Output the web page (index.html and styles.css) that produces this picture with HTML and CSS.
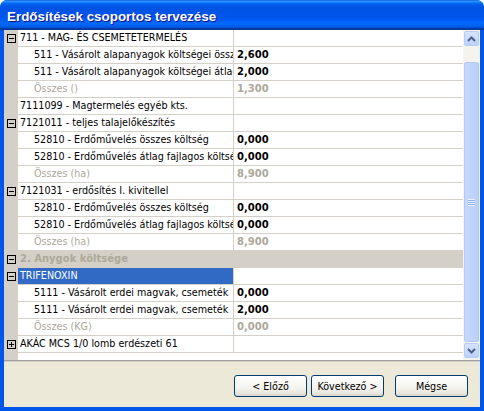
FILE: index.html
```html
<!DOCTYPE html>
<html>
<head>
<meta charset="utf-8">
<link rel="stylesheet" href="styles.css">
</head>
<body>
<div class="window">
  <div class="titlebar"><span class="title">Erdősítések csoportos tervezése</span></div>
  <div class="client">
    <div class="grid">
      <div class="rows">
        <div class="row"><div class="tree"><svg class="box" width="9" height="9" viewBox="0 0 9 9"><rect x="0.5" y="0.5" width="8" height="8" fill="none" stroke="#000"/><path d="M2 4.5H7" stroke="#000"/></svg></div><div class="name">711 - MAG- ÉS CSEMETETERMELÉS</div><div class="val"></div></div>
        <div class="row"><div class="tree"></div><div class="name l1">511 - Vásárolt alapanyagok költségei összesen</div><div class="val">2,600</div></div>
        <div class="row"><div class="tree"></div><div class="name l1">511 - Vásárolt alapanyagok költségei átlaga</div><div class="val">2,000</div></div>
        <div class="row sum"><div class="tree"></div><div class="name l1">Összes ()</div><div class="val">1,300</div></div>
        <div class="row"><div class="tree"></div><div class="name">7111099 - Magtermelés egyéb kts.</div><div class="val"></div></div>
        <div class="row"><div class="tree"><svg class="box" width="9" height="9" viewBox="0 0 9 9"><rect x="0.5" y="0.5" width="8" height="8" fill="none" stroke="#000"/><path d="M2 4.5H7" stroke="#000"/></svg></div><div class="name">7121011 - teljes talajelőkészítés</div><div class="val"></div></div>
        <div class="row"><div class="tree"></div><div class="name l1">52810 - Erdőművelés összes költség</div><div class="val">0,000</div></div>
        <div class="row"><div class="tree"></div><div class="name l1">52810 - Erdőművelés átlag fajlagos költsége</div><div class="val">0,000</div></div>
        <div class="row sum"><div class="tree"></div><div class="name l1">Összes (ha)</div><div class="val">8,900</div></div>
        <div class="row"><div class="tree"><svg class="box" width="9" height="9" viewBox="0 0 9 9"><rect x="0.5" y="0.5" width="8" height="8" fill="none" stroke="#000"/><path d="M2 4.5H7" stroke="#000"/></svg></div><div class="name">7121031 - erdősítés I. kivitellel</div><div class="val"></div></div>
        <div class="row"><div class="tree"></div><div class="name l1">52810 - Erdőművelés összes költség</div><div class="val">0,000</div></div>
        <div class="row"><div class="tree"></div><div class="name l1">52810 - Erdőművelés átlag fajlagos költsége</div><div class="val">0,000</div></div>
        <div class="row sum"><div class="tree"></div><div class="name l1">Összes (ha)</div><div class="val">8,900</div></div>
        <div class="row group"><div class="tree"><svg class="box" width="9" height="9" viewBox="0 0 9 9"><rect x="0.5" y="0.5" width="8" height="8" fill="none" stroke="#000"/><path d="M2 4.5H7" stroke="#000"/></svg></div><div class="name">2. Anygok költsége</div><div class="val"></div></div>
        <div class="row selected"><div class="tree"><svg class="box" width="9" height="9" viewBox="0 0 9 9"><rect x="0.5" y="0.5" width="8" height="8" fill="none" stroke="#000"/><path d="M2 4.5H7" stroke="#000"/></svg></div><div class="name">TRIFENOXIN</div><div class="val"></div></div>
        <div class="row"><div class="tree"></div><div class="name l1">5111 - Vásárolt erdei magvak, csemeték</div><div class="val">0,000</div></div>
        <div class="row"><div class="tree"></div><div class="name l1">5111 - Vásárolt erdei magvak, csemeték</div><div class="val">2,000</div></div>
        <div class="row sum"><div class="tree"></div><div class="name l1">Összes (KG)</div><div class="val">0,000</div></div>
        <div class="row"><div class="tree"><svg class="box" width="9" height="9" viewBox="0 0 9 9"><rect x="0.5" y="0.5" width="8" height="8" fill="none" stroke="#000"/><path d="M2 4.5H7M4.5 2V7" stroke="#000"/></svg></div><div class="name">AKÁC MCS 1/0 lomb erdészeti 61</div><div class="val"></div></div>
      </div>
      <div class="scrollbar">
        <div class="sbtn"><svg width="9" height="6" viewBox="0 0 9 6"><path d="M1 5L4.5 1.5L8 5" fill="none" stroke="#4D6185" stroke-width="2"/></svg></div>
        <div class="track"></div>
        <div class="thumb"><div class="grip"></div></div>
        <div class="sbtn"><svg width="9" height="6" viewBox="0 0 9 6"><path d="M1 1L4.5 4.5L8 1" fill="none" stroke="#4D6185" stroke-width="2"/></svg></div>
      </div>
    </div>
    <div class="sep"></div>
    <div class="buttons">
      <button class="btn">&lt; Előző</button>
      <button class="btn">Következő &gt;</button>
      <button class="btn cancel">Mégse</button>
    </div>
  </div>
</div>
</body>
</html>
```
FILE: styles.css
```css
html, body {
  margin: 0;
  padding: 0;
  background: #ffffff;
}
.window {
  width: 484px;
  height: 411px;
  box-sizing: border-box;
  display: flex;
  flex-direction: column;
  background: #0055EA;
  border-radius: 7px 7px 0 0;
  padding: 0 4px 4px 4px;
  overflow: hidden;
  font-family: "DejaVu Sans", Verdana, sans-serif;
  font-size: 9.6px;
}
.titlebar {
  height: 30px;
  margin: 0 -4px;
  padding-left: 7px;
  display: flex;
  align-items: center;
  background: linear-gradient(to bottom, #0058EE 0%, #3593FF 4%, #288EFF 6%, #127DFF 8%, #036FFC 10%, #0262EE 14%, #0057E5 20%, #0054E3 24%, #0055EB 56%, #005BF5 66%, #026AFE 76%, #0062EF 86%, #0052D6 92%, #0040AB 94%, #003092 100%);
  border-radius: 7px 7px 0 0;
}
.title {
  color: #ffffff;
  font-family: "Liberation Sans", Arial, sans-serif;
  font-weight: bold;
  font-size: 13.4px;
  text-shadow: 1px 1px #0F1089;
  padding-top: 2px;
}
.client {
  flex: 1;
  display: flex;
  flex-direction: column;
  background: #ECE9D8;
}
.grid {
  height: 330px;
  display: flex;
}
.rows {
  flex: 1;
  display: flex;
  flex-direction: column;
  background: linear-gradient(to right, #D4D0C8 14px, #ffffff 14px);
  overflow: hidden;
}
.row {
  display: flex;
  height: 17px;
  flex: none;
  color: #000;
}
.tree {
  width: 14px;
  flex: none;
  background: #D4D0C8;
  display: flex;
  align-items: center;
  padding-left: 3px;
  box-sizing: border-box;
}
.name {
  width: 216px;
  flex: none;
  box-sizing: border-box;
  border-right: 1px solid #D4D0C8;
  border-bottom: 1px solid #D4D0C8;
  padding-left: 2px;
  white-space: nowrap;
  overflow: hidden;
  line-height: 16px;
}
.name.l1 {
  padding-left: 16px;
}
.val {
  flex: 1;
  box-sizing: border-box;
  border-bottom: 1px solid #D4D0C8;
  padding-left: 3px;
  line-height: 16px;
  font-weight: bold;
  font-size: 10px;
  white-space: nowrap;
}
.sum .name, .sum .val {
  color: #ACA899;
}
.group .name, .group .val {
  background: #D4D0C8;
  color: #ACA899;
  font-weight: bold;
  font-size: 10px;
  border-right-color: #D4D0C8;
}
.selected .name {
  background: #316AC5;
  color: #ffffff;
}
.scrollbar {
  width: 17px;
  flex: none;
  display: flex;
  flex-direction: column;
  background: #F4F3EE;
  padding: 1px 0 2px 1px;
  box-sizing: border-box;
}
.sbtn {
  width: 15px;
  height: 15px;
  flex: none;
  box-sizing: border-box;
  border: 1px solid #B8CCF5;
  border-radius: 2px;
  background: linear-gradient(to bottom, #D7E3FD, #BCD0FB);
  display: flex;
  align-items: center;
  justify-content: center;
}
.track {
  height: 16px;
  flex: none;
}
.thumb {
  flex: 1;
  width: 15px;
  box-sizing: border-box;
  border: 1px solid #B4C8F6;
  border-radius: 2px;
  background: linear-gradient(to right, #C8D9FE, #BBCFFC);
  display: flex;
  align-items: center;
  justify-content: center;
  margin-bottom: 1px;
}
.grip {
  width: 7px;
  height: 7px;
  background: repeating-linear-gradient(to bottom, #EEF4FE 0, #EEF4FE 1px, #8CB0F8 1px, #8CB0F8 2px);
}
.sep {
  height: 2px;
  background: #A0A0A0;
  border-bottom: 1px solid #D4D0C8;
  box-sizing: border-box;
}
.buttons {
  flex: 1;
  display: flex;
  justify-content: flex-end;
  align-items: flex-start;
  padding: 13px 12px 0 0;
  gap: 4px;
}
.btn {
  width: 73px;
  height: 22px;
  box-sizing: border-box;
  border: 1px solid #003C74;
  border-radius: 3px;
  background: linear-gradient(to bottom, #FFFFFF 0%, #F4F3EE 60%, #E6E3D8 90%, #D6D0C5 100%);
  font-family: "DejaVu Sans", Verdana, sans-serif;
  font-size: 9.6px;
  color: #000;
  padding: 0;
}
.btn.cancel {
  margin-left: 7px;
}
```
